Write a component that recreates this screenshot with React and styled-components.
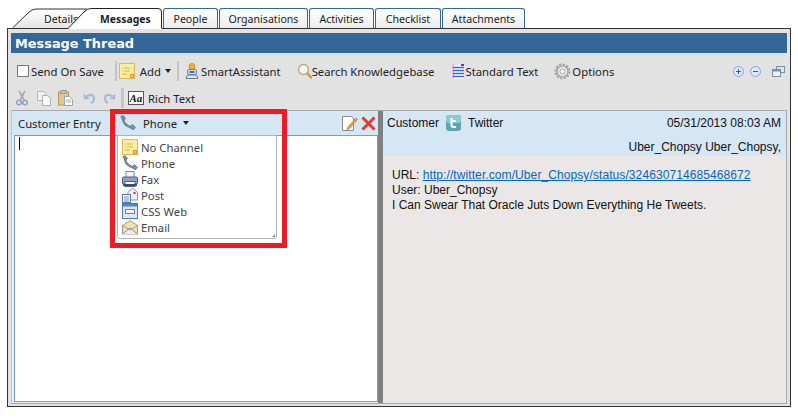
import React from 'react'
import styled, { createGlobalStyle } from 'styled-components'

const GlobalStyle = createGlobalStyle`
  html, body {
    margin: 0;
    padding: 0;
    background: #fff;
  }
  body {
    font-family: "Noto Sans", "Open Sans", sans-serif;
    color: #222;
  }
`

const Page = styled.div`
  width: 798px;
  height: 419px;
  padding: 8px 0 0 7px;
  box-sizing: border-box;
  position: relative;
  overflow: hidden;
`

const TabRow = styled.div`
  display: flex;
  height: 20px;
  position: relative;
  z-index: 1;
`

const SlantTab = styled.div`
  position: relative;
  width: ${({ width }) => width}px;
  margin-left: ${({ offset }) => offset}px;
  height: 21px;
  font-size: ${({ active }) => (active ? 10.4 : 10.6)}px;
  font-weight: ${({ active }) => (active ? 700 : 400)};
  line-height: 23px;
  padding-left: ${({ pad }) => pad}px;
  box-sizing: border-box;
  white-space: nowrap;
  color: #1c1c1c;
  z-index: ${({ active }) => (active ? 2 : 1)};

  svg {
    position: absolute;
    left: 0;
    top: 0;
    z-index: -1;
  }
`

const Tab = styled.div`
  height: 20px;
  width: ${({ width }) => width}px;
  margin-left: 1px;
  box-sizing: border-box;
  border: 1px solid #33669a;
  border-bottom: none;
  border-radius: 3px 3px 0 0;
  background: linear-gradient(#ffffff, #ececec);
  font-size: 10.6px;
  line-height: 21px;
  text-align: center;
  color: #1c1c1c;
  white-space: nowrap;
`

const Frame = styled.div`
  width: 784px;
  height: 379px;
  box-sizing: border-box;
  border: 1px solid #333;
  background: #e2e2e2;
  padding: 4px 3px 2px;
  display: flex;
  flex-direction: column;
`

const TitleBar = styled.div`
  height: 20px;
  flex: none;
  background: #336699;
  color: #fff;
  font-family: "DejaVu Sans", sans-serif;
  font-weight: 700;
  font-size: 12.9px;
  line-height: 21px;
  padding-left: 4px;
`

const Toolbar = styled.div`
  height: ${({ height }) => height}px;
  flex: none;
  display: flex;
  align-items: center;
  padding-left: ${({ pad }) => pad}px;
  margin-bottom: ${({ below }) => below ?? 0}px;
  font-size: 11.3px;
`

const Item = styled.div`
  display: flex;
  align-items: center;
  gap: ${({ gap }) => gap ?? 1}px;
  margin-left: ${({ left }) => left ?? 0}px;
  white-space: nowrap;
`

const CheckBox = styled.span`
  width: 10px;
  height: 10px;
  border: 1px solid #777;
  background: #fff;
  display: block;
  margin-right: 1px;
`

const Separator = styled.span`
  width: ${({ w }) => w ?? 2}px;
  height: ${({ h }) => h ?? 20}px;
  background: #c4c4c4;
  margin: 0 ${({ right }) => right ?? 4}px 0 ${({ left }) => left ?? 4}px;
`

const Caret = styled.span`
  width: 0;
  height: 0;
  border: 3.5px solid transparent;
  border-top: 4px solid #222;
  border-bottom: none;
  margin-left: ${({ left }) => left ?? 3}px;
`

const ZoomGroup = styled.div`
  margin-left: auto;
  margin-right: 2px;
  display: flex;
  align-items: center;
  gap: 6px;
`

const Panels = styled.div`
  flex: 1;
  display: flex;
  border: 1px solid #a8a8a8;
  border-left-color: #c4c4c4;
  min-height: 0;
`

const LeftPanel = styled.div`
  width: 366px;
  flex: none;
  display: flex;
  flex-direction: column;
  background: #e9f1f8;
`

const EntryHeader = styled.div`
  height: 24px;
  flex: none;
  display: flex;
  align-items: center;
  background: #d5e6f5;
  font-size: 11.3px;
  padding: 0 2px 0 6px;
`

const EntryLabel = styled.span`
  width: 102px;
  flex: none;
  white-space: nowrap;
`

const ChannelButton = styled.div`
  display: flex;
  align-items: center;
  gap: 7px;
`

const HeaderActions = styled.div`
  margin-left: auto;
  display: flex;
  align-items: center;
  gap: 3px;
`

const EntryBody = styled.div`
  flex: 1;
  margin: 0 0 1px 2px;
  background: #fff;
  border: 1px solid #6f9fd8;
  position: relative;
`

const TextCaret = styled.span`
  display: block;
  width: 1px;
  height: 13px;
  background: #000;
  margin: 1px 0 0 4px;
`

const Dropdown = styled.div`
  position: absolute;
  left: 102px;
  top: -1px;
  width: 160px;
  height: 104px;
  box-sizing: border-box;
  border: 1px solid #b4b4b4;
  border-radius: 0 0 3px 3px;
  background: #fff;
  padding: 3px 0 0 4px;
  z-index: 2;
`

const DropdownItem = styled.div`
  height: 16px;
  display: flex;
  align-items: center;
  gap: 3px;
  font-size: 11.3px;
  color: #444;
  white-space: nowrap;
`

const Grip = styled.span`
  position: absolute;
  right: 1px;
  bottom: 1px;
  width: 0;
  height: 0;
  border-left: 3px solid transparent;
  border-bottom: 3px solid #8a8a8a;
`

const Splitter = styled.div`
  width: 5px;
  flex: none;
  background: #808080;
`

const RightPanel = styled.div`
  flex: 1;
  display: flex;
  flex-direction: column;
  background: #ebe7e6;
  font-family: "Liberation Sans", Arial, sans-serif;
  font-size: 12px;
  color: #111;
  min-width: 0;
`

const ThreadHeader = styled.div`
  height: 45px;
  flex: none;
  background: #d5e6f5;
  box-sizing: border-box;
  padding: 2px 5px 0 4px;
`

const ThreadLine = styled.div`
  height: ${({ tall }) => (tall ? 21 : 20)}px;
  display: flex;
  align-items: ${({ tall }) => (tall ? 'flex-end' : 'center')};
  justify-content: ${({ end }) => (end ? 'flex-end' : 'flex-start')};
  white-space: nowrap;
`

const Stamp = styled.span`
  margin-left: auto;
`

const Channel = styled.span`
  margin: 0 0 0 7px;
  display: flex;
  align-items: center;
  gap: 7px;
`

const ThreadBody = styled.div`
  padding: 12px 0 0 9px;
  line-height: 15px;
  white-space: nowrap;
`

const ThreadLink = styled.a`
  color: #0066cc;
  text-decoration: underline;
  letter-spacing: 0.09px;
`

const Highlight = styled.div`
  position: absolute;
  left: 110px;
  top: 109px;
  width: 177px;
  height: 139px;
  box-sizing: border-box;
  border: 5px solid #ed1c24;
  z-index: 3;
  pointer-events: none;
`

const NoteIcon = () => (
  <svg width="16" height="16" viewBox="0 0 16 16">
    <rect x="0.500" y="0.500" width="15" height="15" fill="#fdeea0" stroke="#e8b550" />
    <path d="M3 5h1M5 5h6M3 8h1M5 8h6M3 11h5" stroke="#d8b060" />
    <rect x="11.500" y="11.500" width="3" height="3" fill="#f6c860" stroke="#d89838" />
  </svg>
)

const PhoneIcon = () => (
  <svg width="16" height="16" viewBox="0 0 16 16">
    <path d="M3 3c0 4 3 8 9 10" fill="none" stroke="#55677a" strokeWidth="2.200" />
    <path d="M3 3c0 4 3 8 9 10" fill="none" stroke="#b4c2ce" strokeWidth="0.800" />
    <path d="M0.800 1.800L3.200 0.500 5.500 3.500 3 5.500z" fill="#7f93a6" stroke="#475868" strokeWidth="0.600" />
    <path d="M10 11.500l2.500-2 3 3-2.300 2.500z" fill="#7f93a6" stroke="#475868" strokeWidth="0.600" />
  </svg>
)

const FaxIcon = () => (
  <svg width="16" height="16" viewBox="0 0 16 16">
    <rect x="4" y="0.500" width="8" height="6" fill="#f4f6fa" stroke="#7d8aa0" />
    <rect x="0.500" y="6" width="15" height="7" rx="1" fill="#8c9fc4" stroke="#4c5f88" />
    <rect x="3" y="10.500" width="10" height="5" fill="#fff" stroke="#4c5f88" />
    <rect x="1" y="13" width="14" height="2" fill="#2f4f90" />
  </svg>
)

const PostIcon = () => (
  <svg width="16" height="16" viewBox="0 0 16 16">
    <path d="M6 5.500L10.500 1 15.500 5.500V13H6z" fill="#eef2f8" stroke="#8692a8" />
    <rect x="11.500" y="5" width="2" height="2" fill="#d03030" />
    <rect x="0.500" y="7.500" width="8" height="8" fill="#fff" stroke="#5878a8" />
    <path d="M2 10h5M2 12h5M2 14h5" stroke="#6f8cc0" />
  </svg>
)

const WebIcon = () => (
  <svg width="16" height="16" viewBox="0 0 16 16">
    <rect x="0.500" y="0.500" width="15" height="15" fill="#dfe6f4" stroke="#5878b0" />
    <rect x="1" y="1" width="14" height="2.500" fill="#4a86d0" />
    <rect x="3.500" y="6.500" width="9" height="4" fill="#f4f6fb" stroke="#6a7fa8" />
  </svg>
)

const EmailIcon = () => (
  <svg width="16" height="16" viewBox="0 0 16 16">
    <path d="M0.500 6.500L8 1.500l7.500 5V15H0.500z" fill="#f6dfae" stroke="#a09c98" />
    <path d="M0.500 15L8 9l7.500 6" fill="#eceef2" stroke="#8c94a4" />
    <path d="M0.500 6.500L8 11l7.500-4.500" fill="none" stroke="#a89878" />
  </svg>
)

const AssistantIcon = () => (
  <svg width="14" height="16" viewBox="0 0 14 16">
    <circle cx="7" cy="3.500" r="3" fill="#f4b030" stroke="#c07810" strokeWidth="0.700" />
    <rect x="2.500" y="6.500" width="9" height="5" rx="1.500" fill="#cfe0f4" stroke="#6a82a8" />
    <rect x="4.500" y="8" width="5" height="2" fill="#3f6fb0" />
    <path d="M1 15.500l1.500-3.500h9l1.500 3.500z" fill="#dfe6f0" stroke="#6a7a90" />
  </svg>
)

const SearchIcon = () => (
  <svg width="15" height="16" viewBox="0 0 15 16">
    <path d="M10 10l4 4.500" stroke="#d09a40" strokeWidth="2.500" strokeLinecap="round" />
    <circle cx="6.500" cy="6.500" r="5" fill="#eef5fc" stroke="#c8a468" strokeWidth="1.300" />
  </svg>
)

const TextListIcon = () => (
  <svg width="13" height="15" viewBox="0 0 13 15">
    <rect x="0" y="0" width="2" height="15" fill="#e8b8e8" />
    <rect x="2" y="1" width="10" height="14" fill="#fff" />
    <path d="M1 3.500h11M1 6.500h11M1 9.500h11M1 12.500h11" stroke="#3a64e0" strokeWidth="1.500" />
    <rect x="9" y="0" width="3" height="2" fill="#2a50c8" />
  </svg>
)

const GearIcon = () => (
  <svg width="17" height="17" viewBox="0 0 17 17">
    <circle cx="8.500" cy="8.500" r="5.500" fill="#e8e8e8" stroke="#9a9a9a" strokeWidth="1.200" />
    <circle
      cx="8.500"
      cy="8.500"
      r="7"
      fill="none"
      stroke="#a4a4a4"
      strokeWidth="2"
      strokeDasharray="2.300 1.360"
    />
    <circle cx="8.500" cy="8.500" r="2.500" fill="#f6f6f6" stroke="#a8a8a8" />
  </svg>
)

const RoundIcon = ({ plus }) => (
  <svg width="11" height="11" viewBox="0 0 11 11">
    <circle cx="5.500" cy="5.500" r="5" fill="#dbe7f6" stroke="#86a6d4" />
    <path d={plus ? 'M3 5.500h5M5.500 3v5' : 'M3 5.500h5'} stroke="#2f5fa8" />
  </svg>
)

const WindowsIcon = () => (
  <svg width="13" height="11" viewBox="0 0 13 11" style={{ marginLeft: 5 }}>
    <rect x="4.500" y="0.500" width="8" height="6" fill="#dce4ee" stroke="#7890a8" />
    <rect x="0.500" y="3.500" width="8" height="7" fill="#eef2f8" stroke="#7890a8" />
    <rect x="1" y="4" width="7" height="1.500" fill="#7890a8" />
  </svg>
)

const CutIcon = () => (
  <svg width="14" height="16" viewBox="0 0 14 16">
    <path d="M3 1l5 9M9 1L4 10" stroke="#a8a8a8" strokeWidth="1.600" />
    <circle cx="3" cy="12.500" r="2.300" fill="none" stroke="#8ea4c0" strokeWidth="1.500" />
    <circle cx="9" cy="12.500" r="2.300" fill="none" stroke="#8ea4c0" strokeWidth="1.500" />
  </svg>
)

const CopyIcon = () => (
  <svg width="16" height="16" viewBox="0 0 16 16">
    <path d="M1.500 1.500h6l2 2v7h-8z" fill="#f0f0f0" stroke="#b8b8b8" />
    <path d="M6.500 5.500h5l3 3v7h-8z" fill="#f8f8f8" stroke="#b0b0b0" />
  </svg>
)

const PasteIcon = () => (
  <svg width="15" height="16" viewBox="0 0 15 16">
    <rect x="0.500" y="2" width="10" height="13" fill="#e4c888" stroke="#b89858" />
    <rect x="3" y="0.500" width="5" height="3" fill="#c8ccd4" stroke="#8c94a0" />
    <path d="M6.500 6.500h5l3 3v6h-8z" fill="#fafafa" stroke="#9aa4b0" />
    <path d="M8 10h5M8 12h5" stroke="#a8b0bc" />
  </svg>
)

const UndoIcon = ({ flip }) => (
  <svg
    width="13"
    height="12"
    viewBox="0 0 13 12"
    style={flip ? { transform: 'scaleX(-1)' } : undefined}
  >
    <path d="M3 5c3-3.500 8-2.500 8 1.500 0 2-1 3.500-3 4.500" fill="none" stroke="#a8bcd8" strokeWidth="2.200" />
    <path d="M0.500 1.500L1 7.500l5.500-.5z" fill="#a8bcd8" />
  </svg>
)

const RichIcon = () => (
  <svg width="16" height="14" viewBox="0 0 16 14">
    <rect x="0.500" y="0.500" width="15" height="13" fill="#fff" stroke="#555" />
    <text
      x="1.500"
      y="10.500"
      fontFamily="Liberation Serif, serif"
      fontStyle="italic"
      fontWeight="700"
      fontSize="11"
      fill="#111"
    >
      Aa
    </text>
  </svg>
)

const EditIcon = () => (
  <svg width="17" height="17" viewBox="0 0 17 17">
    <path d="M1.500 1.500h9l2 2v12h-11z" fill="#fbfbfb" stroke="#8c8c8c" />
    <path d="M7 12l8-9 1.500 1.500-8 9-2.500 1z" fill="#e8a848" stroke="#a87028" strokeWidth="0.700" />
  </svg>
)

const CloseIcon = () => (
  <svg width="15" height="15" viewBox="0 0 15 15">
    <path d="M1.500 1.500l12 12M13.500 1.500l-12 12" stroke="#e23a2c" strokeWidth="3" />
  </svg>
)

const TwitterIcon = () => (
  <svg width="15" height="16" viewBox="0 0 15 16">
    <rect x="0" y="0" width="15" height="16" rx="3" fill="#5fa4b0" />
    <rect x="0" y="0" width="15" height="8" rx="3" fill="#8fc8d4" />
    <path d="M5.500 3v7c0 1.500 1 2 2 2h2.500M5.500 6h4.500" fill="none" stroke="#fff" strokeWidth="2" />
  </svg>
)

const channels = [
  { label: 'No Channel', Icon: NoteIcon },
  { label: 'Phone', Icon: PhoneIcon },
  { label: 'Fax', Icon: FaxIcon },
  { label: 'Post', Icon: PostIcon },
  { label: 'CSS Web', Icon: WebIcon },
  { label: 'Email', Icon: EmailIcon },
]

const App = () => (
  <Page>
    <GlobalStyle />
    <TabRow>
      <SlantTab width={66} offset={5} pad={32}>
        <svg width="76" height="21">
          <defs>
            <linearGradient id="tabFill" x1="0" y1="0" x2="0" y2="1">
              <stop offset="0" stopColor="#fff" />
              <stop offset="1" stopColor="#e4e4e4" />
            </linearGradient>
          </defs>
          <path d="M0.500 20L16 5Q20 1 24 1H75V20z" fill="url(#tabFill)" />
          <path d="M0.500 20L16 5Q20 1 24 1H75" fill="none" stroke="#333" />
        </svg>
        Details
      </SlantTab>
      <SlantTab width={94} offset={-10} pad={32} active>
        <svg width="94" height="21">
          <path d="M0 21L16 4Q19 0.500 23 0.500H90Q93.500 0.500 93.500 4V21z" fill="#fff" />
          <path d="M0 20.500L16 4Q19 0.500 23 0.500H90Q93.500 0.500 93.500 4V20" fill="none" stroke="#222" />
        </svg>
        Messages
      </SlantTab>
      <Tab width={55}>People</Tab>
      <Tab width={89}>Organisations</Tab>
      <Tab width={65}>Activities</Tab>
      <Tab width={66}>Checklist</Tab>
      <Tab width={83}>Attachments</Tab>
    </TabRow>
    <Frame>
      <TitleBar>Message Thread</TitleBar>
      <Toolbar height={36} pad={6}>
        <Item>
          <CheckBox />
          Send On Save
        </Item>
        <Separator left={11} right={2} />
        <Item gap={5}>
          <NoteIcon />
          Add
          <Caret left={-1} />
        </Item>
        <Separator left={6} right={6} />
        <Item gap={2}>
          <AssistantIcon />
          SmartAssistant
        </Item>
        <Item left={16} gap={0}>
          <SearchIcon />
          Search Knowledgebase
        </Item>
        <Item left={18} gap={0}>
          <TextListIcon />
          Standard Text
        </Item>
        <Item left={16} gap={1}>
          <GearIcon />
          Options
        </Item>
        <ZoomGroup>
          <RoundIcon plus />
          <RoundIcon />
          <WindowsIcon />
        </ZoomGroup>
      </Toolbar>
      <Toolbar height={18} pad={5} below={3}>
        <Item>
          <CutIcon />
        </Item>
        <Item left={6}>
          <CopyIcon />
        </Item>
        <Item left={6}>
          <PasteIcon />
        </Item>
        <Item left={10}>
          <UndoIcon />
        </Item>
        <Item left={7}>
          <UndoIcon flip />
        </Item>
        <Separator w={3} left={5} right={4} />
        <Item gap={4}>
          <RichIcon />
          Rich Text
        </Item>
      </Toolbar>
      <Panels>
        <LeftPanel>
          <EntryHeader>
            <EntryLabel>Customer Entry</EntryLabel>
            <ChannelButton>
              <PhoneIcon />
              <Item gap={3}>
                Phone
                <Caret />
              </Item>
            </ChannelButton>
            <HeaderActions>
              <EditIcon />
              <CloseIcon />
            </HeaderActions>
          </EntryHeader>
          <EntryBody>
            <TextCaret />
            <Dropdown>
              {channels.map(({ label, Icon }) => (
                <DropdownItem key={label}>
                  <Icon />
                  {label}
                </DropdownItem>
              ))}
              <Grip />
            </Dropdown>
          </EntryBody>
        </LeftPanel>
        <Splitter />
        <RightPanel>
          <ThreadHeader>
            <ThreadLine>
              Customer
              <Channel>
                <TwitterIcon />
                Twitter
              </Channel>
              <Stamp>05/31/2013 08:03 AM</Stamp>
            </ThreadLine>
            <ThreadLine end tall>
              Uber_Chopsy Uber_Chopsy,
            </ThreadLine>
          </ThreadHeader>
          <ThreadBody>
            <div>
              URL: <ThreadLink href="#">http://twitter.com/Uber_Chopsy/status/324630714685468672</ThreadLink>
            </div>
            <div>User: Uber_Chopsy</div>
            <div>I Can Swear That Oracle Juts Down Everything He Tweets.</div>
          </ThreadBody>
        </RightPanel>
      </Panels>
    </Frame>
    <Highlight />
  </Page>
)

export default App
